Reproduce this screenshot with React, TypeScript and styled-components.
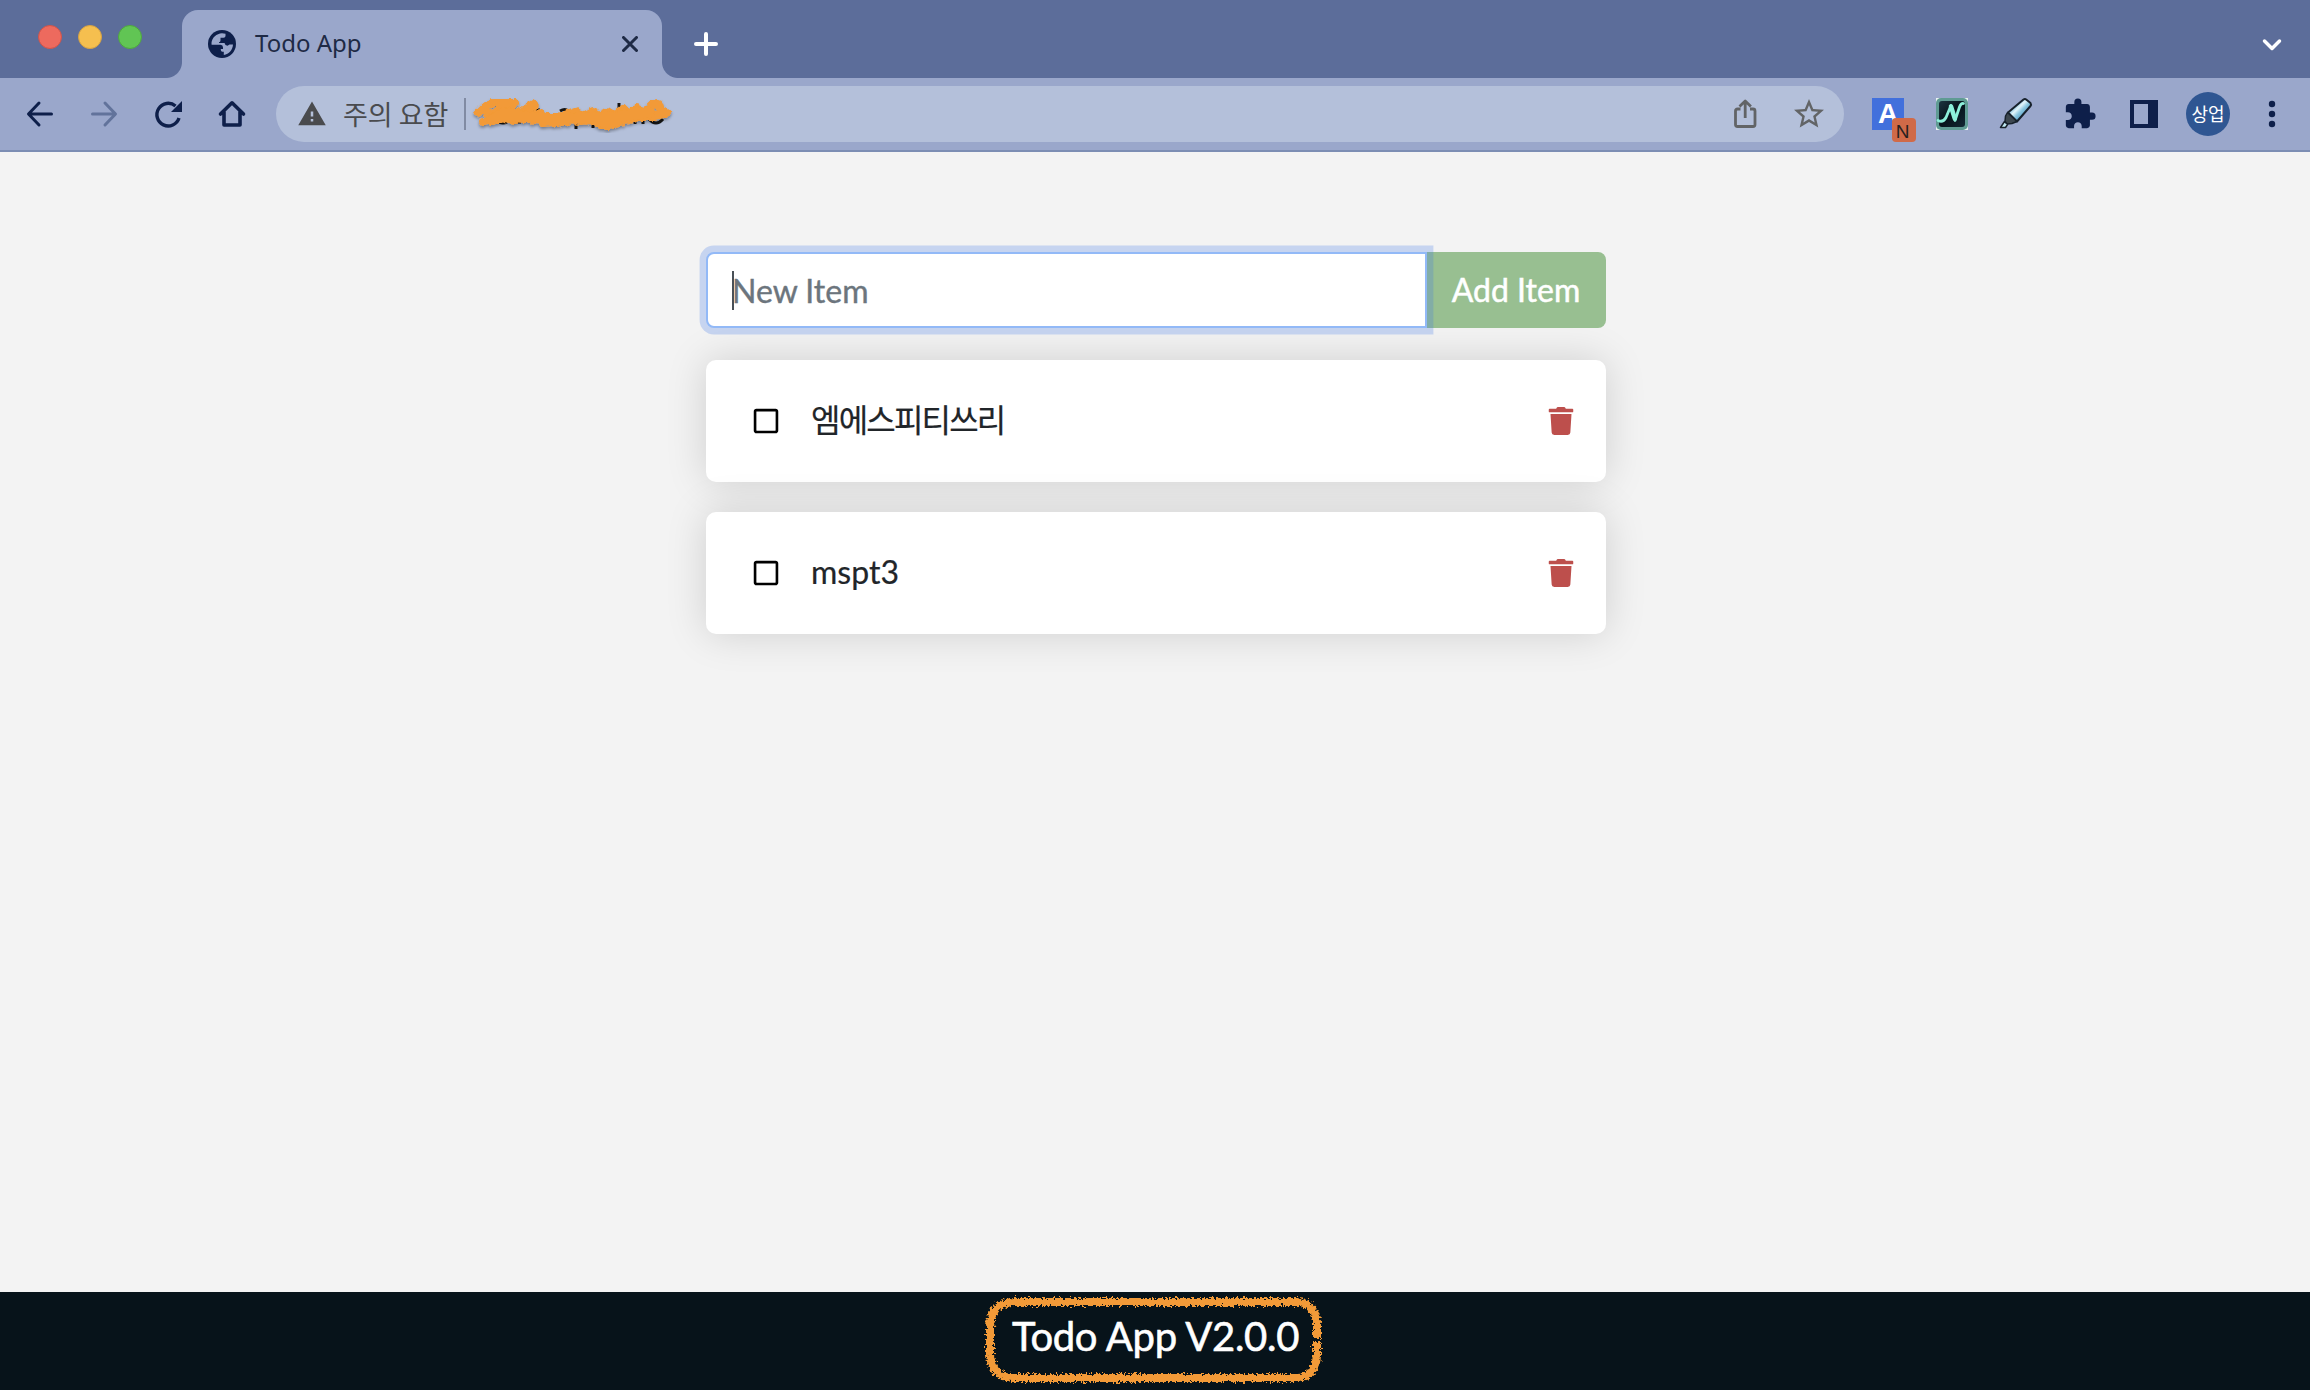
import React from 'react';
import styled, { createGlobalStyle } from 'styled-components';
import { FaRegSquare, FaTrash } from 'react-icons/fa';
import { MdExtension, MdStarBorder, MdWarning } from 'react-icons/md';

const Global = createGlobalStyle`
  * { box-sizing: border-box; }
  body { margin: 0; background: #f3f3f3; }
  svg { display: block; flex: none; }
`;

const Window = styled.div`
  width: 2310px;
  height: 1390px;
  display: flex;
  flex-direction: column;
  overflow: hidden;
  background: #f3f3f3;
  color: #212529;
  font-family: Lato, 'Noto Sans CJK KR', sans-serif;
`;

const TabStrip = styled.header`
  height: 78px;
  flex: none;
  display: flex;
  align-items: flex-start;
  padding: 10px 24px 0 38px;
  background: #5c6d9a;
`;

const Lights = styled.div`
  display: flex;
  gap: 16px;
  width: 144px;
  padding-top: 15px;
`;

const Light = styled.span<{ $fill: string; $edge: string }>`
  width: 24px;
  height: 24px;
  border-radius: 50%;
  background: ${(p) => p.$fill};
  border: 1px solid ${(p) => p.$edge};
`;

const Tab = styled.div`
  position: relative;
  width: 480px;
  height: 68px;
  display: flex;
  align-items: center;
  padding: 0 24px 0 26px;
  border-radius: 16px 16px 0 0;
  background: #9aa7cb;
  color: #1e2a45;
  &::before,
  &::after {
    content: '';
    position: absolute;
    bottom: 0;
    width: 16px;
    height: 16px;
  }
  &::before {
    left: -16px;
    background: radial-gradient(circle at 0 0, transparent 15.5px, #9aa7cb 16.5px);
  }
  &::after {
    right: -16px;
    background: radial-gradient(circle at 100% 0, transparent 15.5px, #9aa7cb 16.5px);
  }
`;

const TabTitle = styled.span`
  flex: 1;
  margin: -2px 0 0 19px;
  font: 24px/32px 'Noto Sans', sans-serif;
`;

const NewTab = styled.span`
  margin: 20px 0 0 30px;
  flex: 1;
`;

const Chevron = styled.span`
  margin-top: 20px;
`;

const Toolbar = styled.nav`
  height: 74px;
  flex: none;
  display: flex;
  align-items: center;
  padding: 0 0 0 24px;
  background: #9aa7cb;
  border-bottom: 2px solid #7c8db3;
  color: #0e1f4a;
`;

const NavButtons = styled.div`
  display: flex;
  gap: 32px;
  width: 252px;
`;

const Omnibox = styled.div`
  width: 1568px;
  height: 56px;
  display: flex;
  align-items: center;
  padding: 0 17px 0 21px;
  border-radius: 28px;
  background: #b4c0da;
  color: #4a4b4e;
`;

const Warn = styled.span`
  width: 121px;
  padding-left: 16px;
  margin-top: -1px;
  font: 27px/40px 'Noto Sans CJK KR', sans-serif;
  white-space: nowrap;
`;

const Divider = styled.i`
  width: 2px;
  height: 32px;
  margin: 0 -1px 0 16px;
  background: #818ba3;
`;

const Spacer = styled.span`
  flex: 1;
`;

const BoxIcons = styled.div`
  display: flex;
  align-items: center;
  gap: 30px;
`;

const Extensions = styled.div`
  display: grid;
  grid-template-columns: repeat(7, 64px);
  place-items: center;
  margin-left: 12px;
`;

const Translate = styled.span`
  position: relative;
  width: 32px;
  height: 32px;
  background: #4270dc;
  color: #fff;
  font: bold 28px/31px 'Liberation Sans', sans-serif;
  padding-left: 6px;
`;

const Badge = styled.b`
  position: absolute;
  left: 20px;
  top: 20px;
  width: 24px;
  height: 24px;
  border-radius: 4px;
  background: #d06a48;
  color: #26211f;
  font: 19px/27px 'Liberation Sans', sans-serif;
  padding-right: 3px;
  text-align: center;
`;

const Avatar = styled.span`
  width: 44px;
  height: 44px;
  border-radius: 50%;
  background: #2f5692;
  color: #fff;
  font: 18px/43px 'Noto Sans CJK KR', sans-serif;
  text-align: center;
`;

const Main = styled.main`
  flex: 1;
  width: 900px;
  margin: 0 0 0 706px;
  padding-top: 100px;
`;

const InputGroup = styled.div`
  display: flex;
  height: 76px;
  margin-bottom: 32px;
`;

const Field = styled.div`
  position: relative;
  z-index: 1;
  width: 721px;
  display: flex;
  align-items: center;
  padding: 0 24px;
  background: #fff;
  border: 2px solid #92b9f7;
  border-radius: 8px 0 0 8px;
  box-shadow: 0 0 0 6.4px rgba(65, 120, 232, 0.25);
  color: #6c757d;
`;

const Caret = styled.i`
  width: 2px;
  height: 39px;
  margin-right: -2px;
  background: #495057;
`;

const Placeholder = styled.span`
  padding-top: 2px;
  font-size: 32px;
  line-height: 48px;
  -webkit-text-stroke: 0.4px;
`;

const AddButton = styled.button`
  flex: 1;
  margin-left: -2px;
  padding: 0 0 0 1px;
  border: 0;
  border-radius: 0 8px 8px 0;
  background: #98bf91;
  color: #fff;
  font: 32px/48px Lato, sans-serif;
  -webkit-text-stroke: 0.5px;
`;

const Card = styled.article`
  height: 122px;
  margin-bottom: 30px;
  display: flex;
  align-items: center;
  padding: 0 31px 0 46px;
  border-radius: 10px;
  background: #fff;
  box-shadow: 0 0 40px rgba(0, 0, 0, 0.15);
  color: #212529;
`;

const ItemName = styled.span<{ $tracking: string }>`
  flex: 1;
  margin: -2px 0 0 31px;
  font-size: 32px;
  line-height: 48px;
  letter-spacing: ${(p) => p.$tracking};
  -webkit-text-stroke: 0.2px;
`;

const Footer = styled.footer`
  height: 98px;
  flex: none;
  display: flex;
  justify-content: center;
  background: #07131a;
  color: #fff;
`;

const Version = styled.div`
  position: relative;
  padding: 14px 0 0 1px;
  font-size: 40px;
  line-height: 60px;
  letter-spacing: -0.3px;
  -webkit-text-stroke: 0.6px;
`;

const Marker = styled.svg`
  position: absolute;
  left: calc(50% - 176px);
  top: 0;
`;

const line = { fill: 'none', stroke: 'currentColor', strokeWidth: 4, strokeLinecap: 'round', strokeLinejoin: 'round' } as const;

const Scribble = () => (
  <svg width="220" height="48" viewBox="0 0 220 48">
    <defs>
      <filter id="scrib" x="-5%" y="-20%" width="110%" height="150%">
        <feTurbulence type="fractalNoise" baseFrequency="0.2" numOctaves="2" seed="4" />
        <feDisplacementMap in="SourceGraphic" scale="5" xChannelSelector="R" yChannelSelector="G" result="d" />
        <feDropShadow in="d" dx="0" dy="2" stdDeviation="1.5" floodOpacity="0.35" />
      </filter>
    </defs>
    <g fill="none" stroke="#151515" strokeWidth="3">
      <path d="M23 24v8M34 32q4 2 8 0M50 32h6M68 20h7M95 21q5-3 8 0M111 26v13M128 28v10M154 13v5M170 26v8M178 26v8M184 29q7 8 14 0" />
    </g>
    <g fill="none" stroke="#f29a37" strokeLinecap="round" strokeLinejoin="round" filter="url(#scrib)">
      <path strokeWidth="8" d="M13 23L20 16 28 13 40 13 50 13 44 20 35 26 24 31 18 32 M20 20L26 26 36 18 47 22 40 28 50 30 56 22 69 14 68 17 58 26 64 30 74 23 82 28 78 33 88 32 96 26 102 31 92 33 M100 25L110 21 118 26 128 21 136 26 142 21 150 26 158 18 164 24 172 18 180 22 186 15 194 14 196 20 202 23 190 26 M106 30L116 31 126 30 132 34 144 36 154 32 164 30 174 27 186 27" />
      <path strokeWidth="12" d="M40 23Q58 27 78 29L100 29 128 27 150 28 164 25 184 22M134 30L147 33 153 29M28 29L38 25 60 27" />
    </g>
  </svg>
);

const Globe = () => (
  <svg width="28" height="28" viewBox="0 0 28 28">
    <circle cx="14" cy="14" r="14" fill="#0e1f4a" />
    <path
      fill="#9aa7cb"
      d="M3.500 12.800C4 7.500 8.500 3.500 14 3.200L17.500 3.700V6Q17.500 7.800 15.500 7.800H12.500V10.500Q12.500 12 11 12.200V13H16.500Q17 15.500 19.500 15.700L21.500 14.500H25C24.700 20 21 24 15.800 25V21.800H14.500Q12.800 21.800 12.800 20V19H15V17.500Q15 15 12.500 14.800H3.600z"
    />
  </svg>
);

const ScriptN = () => (
  <svg width="32" height="32" viewBox="0 0 32 32">
    <defs>
      <linearGradient id="nbg" x1="0" y1="0" x2="1" y2="1">
        <stop offset="0" stopColor="#1d3440" />
        <stop offset="0.5" stopColor="#07131b" />
        <stop offset="1" stopColor="#122833" />
      </linearGradient>
    </defs>
    <rect width="32" height="32" fill="#e9f3f2" />
    <rect width="32" height="32" rx="5" fill="#5f9b93" />
    <rect x="3" y="3" width="26" height="26" rx="3" fill="url(#nbg)" />
    <path {...line} stroke="#8df0da" strokeWidth="2.8" d="M2 22.500q5 2.500 8-3L15 7.500l4 15L23.500 9q1.500-4 4-3.500" />
    <path {...line} stroke="#8df0da" strokeWidth="4.5" d="M15 8.500l3.800 12" />
  </svg>
);

const Highlighter = () => (
  <svg width="34" height="34" viewBox="0 0 34 34">
    <defs>
      <linearGradient id="pen" x1="0.25" y1="0.25" x2="0.75" y2="0.75">
        <stop offset="0" stopColor="#58a5c9" />
        <stop offset="0.35" stopColor="#e4f6fb" />
        <stop offset="0.6" stopColor="#8cc8e0" />
        <stop offset="1" stopColor="#4c94bd" />
      </linearGradient>
    </defs>
    <path d="M9 15.500L24.500 2.500Q26 1.500 27.500 2.700L31.500 6Q32.500 7.500 31.500 9L18 24.500z" fill="url(#pen)" stroke="#18222c" strokeWidth="2" strokeLinejoin="round" />
    <path d="M8.500 15.500L18 24.500 13 26.500 8 27 6 24.500 6.500 19z" fill="#3d474f" stroke="#18222c" strokeWidth="1.5" strokeLinejoin="round" />
    <path d="M5.500 24.500L8.500 27.500 6.500 30.500H1.500z" fill="#bfe8f2" stroke="#18222c" strokeWidth="1.5" strokeLinejoin="round" />
  </svg>
);

const items = [
  { name: '엠에스피티쓰리', tracking: '-1.8px' },
  { name: 'mspt3', tracking: '0' },
];

const App = () => (
  <Window>
    <Global />
    <TabStrip>
      <Lights>
        <Light $fill="#ed6a5e" $edge="#d0544a" />
        <Light $fill="#f5bf4f" $edge="#d6a243" />
        <Light $fill="#61c554" $edge="#4fa73f" />
      </Lights>
      <Tab>
        <Globe />
        <TabTitle>Todo App</TabTitle>
        <svg width="16" height="16" viewBox="0 0 16 16"><path {...line} strokeWidth="3" d="M1.500 1.500l13 13M14.500 1.500l-13 13" /></svg>
      </Tab>
      <NewTab>
        <svg width="28" height="28" viewBox="0 0 28 28" color="#fff"><path {...line} d="M14 4v20M4 14h20" /></svg>
      </NewTab>
      <Chevron>
        <svg width="28" height="28" viewBox="0 0 28 28" color="#fff"><path {...line} strokeWidth="3.5" d="M6.500 11l7.500 7.500 7.500-7.500" /></svg>
      </Chevron>
    </TabStrip>
    <Toolbar>
      <NavButtons>
        <svg width="32" height="32" viewBox="0 0 32 32"><path {...line} strokeWidth="3" d="M27.500 16H5M15 5L4.500 16 15 27" /></svg>
        <svg width="32" height="32" viewBox="0 0 32 32" color="#62739b"><path {...line} strokeWidth="3" d="M4.500 16h22.500M17 5l10.500 11L17 27" /></svg>
        <svg width="32" height="32" viewBox="0 0 32 32"><path {...line} strokeWidth="3.4" strokeLinecap="butt" d="M27 20A11.300 11.300 0 1 1 23.500 8" /><path fill="currentColor" d="M30 3v11H19z" /></svg>
        <svg width="32" height="32" viewBox="0 0 32 32"><path {...line} strokeWidth="3.6" d="M4.500 16L16 4.800 27.500 16M8 14v13h16V14" /></svg>
      </NavButtons>
      <Omnibox>
        <MdWarning size={30} />
        <Warn>주의 요함</Warn>
        <Divider />
        <Scribble />
        <Spacer />
        <BoxIcons>
          <svg width="32" height="32" viewBox="0 0 32 32" color="#626466"><path {...line} strokeWidth="2.8" strokeLinecap="butt" d="M11.500 11H8.500Q6.500 11 6.500 13V26.500Q6.500 28.500 8.500 28.500H24Q26 28.500 26 26.500V13Q26 11 24 11H21M16.200 20V4M10.500 8.500L16.200 3l5.700 5.500" /></svg>
          <MdStarBorder size={36} color="#626466" />
        </BoxIcons>
      </Omnibox>
      <Extensions>
        <Translate>A<Badge>N</Badge></Translate>
        <ScriptN />
        <Highlighter />
        <MdExtension size={34} />
        <svg width="28" height="28" viewBox="0 0 28 28"><path fill="currentColor" fillRule="evenodd" d="M0 0h28v28H0zM4 4v20h14V4z" /></svg>
        <Avatar>상업</Avatar>
        <svg width="28" height="28" viewBox="0 0 28 28" fill="currentColor"><circle cx="14" cy="4" r="3.2" /><circle cx="14" cy="14" r="3.2" /><circle cx="14" cy="24" r="3.2" /></svg>
      </Extensions>
    </Toolbar>
    <Main>
      <InputGroup>
        <Field><Caret /><Placeholder>New Item</Placeholder></Field>
        <AddButton>Add Item</AddButton>
      </InputGroup>
      {items.map(({ name, tracking }) => (
        <Card key={name}>
          <FaRegSquare size={28} color="#000" />
          <ItemName $tracking={tracking}>{name}</ItemName>
          <FaTrash size={28} color="#bd4f4c" />
        </Card>
      ))}
    </Main>
    <Footer>
      <Version>
        Todo App V2.0.0
        <Marker width="350" height="98" viewBox="0 0 350 98">
          <defs>
            <filter id="chalk" x="-5%" y="-10%" width="110%" height="120%">
              <feTurbulence type="fractalNoise" baseFrequency="0.45" numOctaves="3" seed="7" />
              <feDisplacementMap in="SourceGraphic" scale="8" xChannelSelector="R" yChannelSelector="G" />
            </filter>
          </defs>
          <path
            d="M338 46V32C338 20 330 10 318 10H36C18 10 11 20 11 36V62C11 76 20 86 34 86H318C330 86 338 76 338 62V50"
            fill="none"
            stroke="#f29a37"
            strokeWidth="8"
            filter="url(#chalk)"
          />
        </Marker>
      </Version>
    </Footer>
  </Window>
);

export default App;
